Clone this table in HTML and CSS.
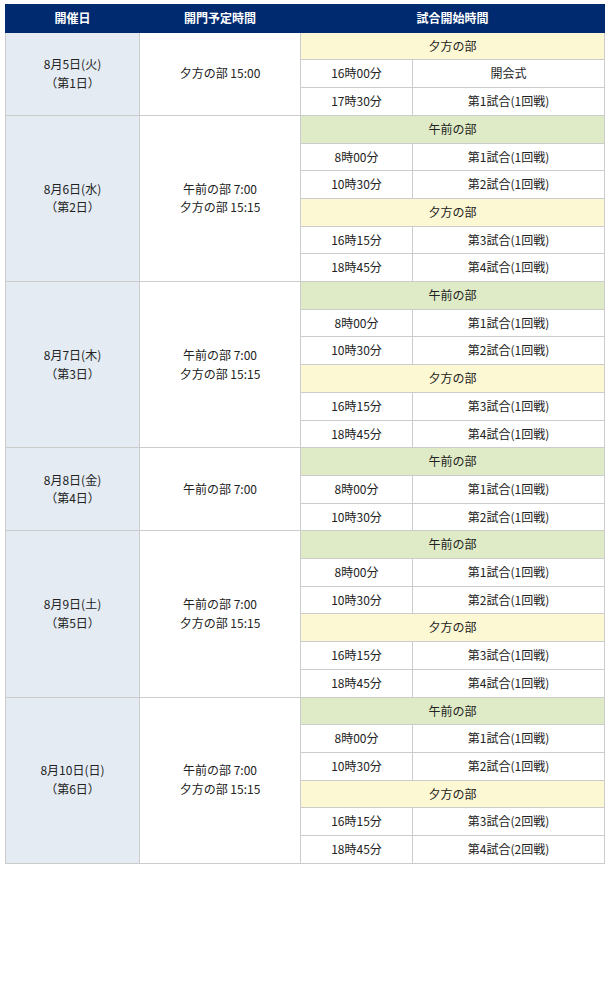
FILE: index.html
```html
<!DOCTYPE html>
<html lang="ja">
<head>
<meta charset="utf-8">
<title>日程</title>
<link rel="stylesheet" href="styles.css">
</head>
<body>
<div class="wrap">
<table class="schedule">
  <colgroup>
    <col class="c-date"><col class="c-gate"><col class="c-time"><col class="c-game">
  </colgroup>
  <thead>
    <tr><th>開催日</th><th>開門予定時間</th><th colspan="2">試合開始時間</th></tr>
  </thead>
  <tbody>
    <tr><td class="date" rowspan="3">8月5日(火)<br>（第1日）</td><td class="gate" rowspan="3">夕方の部 15:00</td><td class="eve" colspan="2">夕方の部</td></tr>
    <tr><td>16時00分</td><td>開会式</td></tr>
    <tr><td>17時30分</td><td>第1試合(1回戦)</td></tr>

    <tr><td class="date" rowspan="6">8月6日(水)<br>（第2日）</td><td class="gate" rowspan="6">午前の部 7:00<br>夕方の部 15:15</td><td class="am" colspan="2">午前の部</td></tr>
    <tr><td>8時00分</td><td>第1試合(1回戦)</td></tr>
    <tr><td>10時30分</td><td>第2試合(1回戦)</td></tr>
    <tr><td class="eve" colspan="2">夕方の部</td></tr>
    <tr><td>16時15分</td><td>第3試合(1回戦)</td></tr>
    <tr><td>18時45分</td><td>第4試合(1回戦)</td></tr>

    <tr><td class="date" rowspan="6">8月7日(木)<br>（第3日）</td><td class="gate" rowspan="6">午前の部 7:00<br>夕方の部 15:15</td><td class="am" colspan="2">午前の部</td></tr>
    <tr><td>8時00分</td><td>第1試合(1回戦)</td></tr>
    <tr><td>10時30分</td><td>第2試合(1回戦)</td></tr>
    <tr><td class="eve" colspan="2">夕方の部</td></tr>
    <tr><td>16時15分</td><td>第3試合(1回戦)</td></tr>
    <tr><td>18時45分</td><td>第4試合(1回戦)</td></tr>

    <tr><td class="date" rowspan="3">8月8日(金)<br>（第4日）</td><td class="gate" rowspan="3">午前の部 7:00</td><td class="am" colspan="2">午前の部</td></tr>
    <tr><td>8時00分</td><td>第1試合(1回戦)</td></tr>
    <tr><td>10時30分</td><td>第2試合(1回戦)</td></tr>

    <tr><td class="date" rowspan="6">8月9日(土)<br>（第5日）</td><td class="gate" rowspan="6">午前の部 7:00<br>夕方の部 15:15</td><td class="am" colspan="2">午前の部</td></tr>
    <tr><td>8時00分</td><td>第1試合(1回戦)</td></tr>
    <tr><td>10時30分</td><td>第2試合(1回戦)</td></tr>
    <tr><td class="eve" colspan="2">夕方の部</td></tr>
    <tr><td>16時15分</td><td>第3試合(1回戦)</td></tr>
    <tr><td>18時45分</td><td>第4試合(1回戦)</td></tr>

    <tr><td class="date" rowspan="6">8月10日(日)<br>（第6日）</td><td class="gate" rowspan="6">午前の部 7:00<br>夕方の部 15:15</td><td class="am" colspan="2">午前の部</td></tr>
    <tr><td>8時00分</td><td>第1試合(1回戦)</td></tr>
    <tr><td>10時30分</td><td>第2試合(1回戦)</td></tr>
    <tr><td class="eve" colspan="2">夕方の部</td></tr>
    <tr><td>16時15分</td><td>第3試合(2回戦)</td></tr>
    <tr><td>18時45分</td><td>第4試合(2回戦)</td></tr>
  </tbody>
</table>
</div>
</body>
</html>
```
FILE: styles.css
```css
html, body {
  margin: 0;
  padding: 0;
  background: #ffffff;
}
.wrap {
  padding: 4px 0 0 5px;
}
.schedule {
  width: 600px;
  border-collapse: collapse;
  table-layout: fixed;
  font-family: "Noto Sans CJK JP", "Noto Sans", sans-serif;
  font-size: 12px;
  line-height: 18.7px;
  color: #222222;
}
.c-date { width: 134px; }
.c-gate { width: 161px; }
.c-time { width: 112px; }
.c-game { width: auto; }
.schedule th {
  background: #002a6f;
  color: #ffffff;
  font-weight: bold;
  text-align: center;
  padding: 4px 4px 4px;
  border: 1px solid #002a6f;
}
.schedule td {
  border: 1px solid #cccccc;
  text-align: center;
  vertical-align: middle;
  padding: 4px 4px;
  background: #ffffff;
}
.schedule td.date {
  background: #e4ebf3;
}
.schedule td.eve {
  background: #fdf8d4;
}
.schedule td.am {
  background: #deebc6;
}
```
